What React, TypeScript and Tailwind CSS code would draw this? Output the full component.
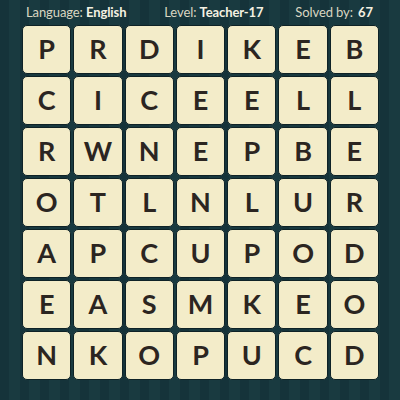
import React from 'react';

const ROWS = ['PRDIKEB', 'CICEELL', 'RWNEPBE', 'OTLNLUR', 'APCUPOD', 'EASMKEO', 'NKOPUCD'];

const App: React.FC = () => {
    return (
        <div
            className="w-[400px] h-[400px] overflow-hidden flex flex-col items-center bg-[#17353a] bg-[repeating-linear-gradient(90deg,#15333a_0px,#15333a_9px,#193a40_9px,#193a40_20px)]"
            style={{ fontFamily: 'Lato, "Open Sans", sans-serif' }}
        >
            {/* Header */}
            <div className="w-full flex justify-between items-center h-[25px] pl-[26px] pr-[27px] text-[13px] text-[#d9d6c2] leading-none tracking-[-0.1px]">
                <span>
                    Language: <b className="text-[#f4f1e2] font-bold">English</b>
                </span>
                <span className="ml-[6px]">
                    Level: <b className="text-[#f4f1e2] font-bold">Teacher-17</b>
                </span>
                <span>
                    Solved by: <b className="text-[#f4f1e2] font-bold ml-0.5">67</b>
                </span>
            </div>

            {/* Board */}
            <div className="grid grid-cols-7 gap-[2px] w-[357px] ml-[1px]">
                {ROWS.join('').split('').map((ch, i) => (
                    <div
                        key={i}
                        className="h-[49px] rounded-[5px] bg-[#f3ecc9] border border-[#0e2226] flex items-center justify-center text-[27px] font-bold text-[#2b2521]"
                    >
                        {ch}
                    </div>
                ))}
            </div>
        </div>
    );
};

export default App;
